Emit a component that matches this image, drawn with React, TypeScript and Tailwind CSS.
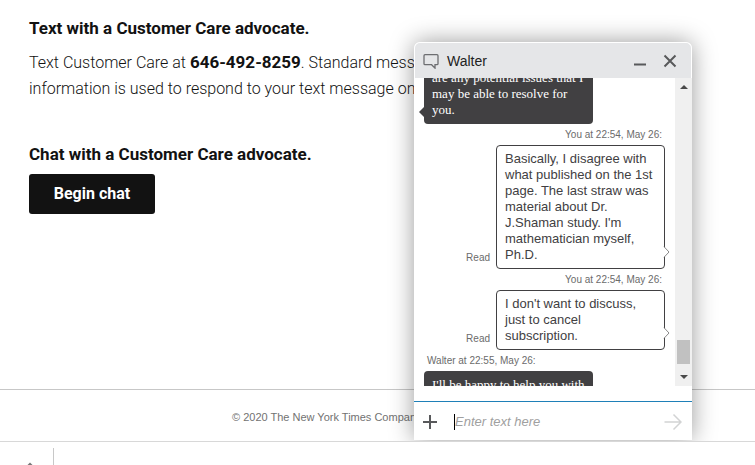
import React, { useState } from "react";

type Message = {
  id: number;
  from: "agent" | "visitor";
  meta?: string;
  text: string;
};

const messages: Message[] = [
  {
    id: 1,
    from: "agent",
    text: "are any potential issues that I may be able to resolve for you.",
  },
  {
    id: 2,
    from: "visitor",
    meta: "You at 22:54, May 26:",
    text: "Basically, I disagree with what published on the 1st page. The last straw was material about Dr. J.Shaman study. I'm mathematician myself, Ph.D.",
  },
  {
    id: 3,
    from: "visitor",
    meta: "You at 22:54, May 26:",
    text: "I don't want to discuss, just to cancel subscription.",
  },
  {
    id: 4,
    from: "agent",
    meta: "Walter at 22:55, May 26:",
    text: "I'll be happy to help you with that.",
  },
];

function AgentMessage({ message }: { message: Message }) {
  return (
    <div className="pl-2.5">
      {message.meta && (
        <p className="mt-[3px] mb-0.5 pl-[3px] text-[10px] leading-4 text-[#6b6b6b]">{message.meta}</p>
      )}
      <div className="relative w-[169px] rounded bg-[#414042] px-2 py-1.5 font-['Liberation_Serif',serif] text-[13px] leading-4 text-white">
        {message.text}
        <svg className="absolute bottom-1.5 -left-[5px] h-3 w-[6px]" viewBox="0 0 6 12" fill="#414042">
          <path d="M6 0L0 6l6 6z" />
        </svg>
      </div>
    </div>
  );
}

function VisitorMessage({ message }: { message: Message }) {
  return (
    <div className="flex flex-col items-end pr-2.5">
      <p className="mt-[3px] mb-0.5 pr-[3px] text-[10px] leading-4 text-[#6b6b6b]">{message.meta}</p>
      <div className="flex items-end gap-1.5">
        <span className="pb-[3px] text-[10px] leading-4 text-[#6b6b6b]">Read</span>
        <div className="relative w-[169px] rounded border border-[#414042] bg-white px-2 py-[5px] text-[13px] leading-4 text-[#414042]">
          {message.text}
          <svg className="absolute -right-1.5 bottom-2.5 h-3 w-[7px]" viewBox="0 0 7 12" fill="none">
            <path d="M0 1h1v10H0z" fill="#fff" />
            <path d="M1 .7L6 6l-5 5.3" fill="#fff" stroke="#8a8a8a" />
          </svg>
        </div>
      </div>
    </div>
  );
}

function ChatWidget() {
  const [open, setOpen] = useState(true);
  const [minimized, setMinimized] = useState(false);
  const [draft, setDraft] = useState("");

  if (!open) return null;

  return (
    <aside
      aria-label="Chat"
      className="absolute right-[63px] bottom-px w-[278px] overflow-hidden rounded-t-md bg-white font-['Liberation_Sans',Arial,sans-serif] shadow-[0_0_24px_rgba(0,0,0,0.4)]"
    >
      {/* Header */}
      <header className="flex h-9 items-center rounded-t-md border border-b-0 border-white bg-[#e5e6e8] pr-3.5 pl-2">
        <svg className="mr-2 h-4 w-4" viewBox="0 0 16 16" fill="none" stroke="#6d6e71" strokeWidth="1.3">
          <path d="M2 1.7h12q1 0 1 1v8q0 1-1 1h-2v3.4L8.600 11.700H2q-1 0-1-1v-8q0-1 1-1z" />
        </svg>
        <h2 className="flex-1 text-sm text-[#222]">Walter</h2>
        <button type="button" aria-label="Minimize" onClick={() => setMinimized(!minimized)}>
          <svg className="h-3.5 w-3.5" viewBox="0 0 14 14">
            <path d="M1 9.500h12v2H1z" fill="#58595b" />
          </svg>
        </button>
        <button type="button" aria-label="Close" className="ml-4" onClick={() => setOpen(false)}>
          <svg className="h-3.5 w-3.5" viewBox="0 0 14 14" stroke="#58595b" strokeWidth="2">
            <path d="M1.500 1.500l11 11M12.500 1.500l-11 11" />
          </svg>
        </button>
      </header>

      {!minimized && (
        <>
          <div className="flex h-[308px]">
            {/* Messages */}
            <div className="flex-1 overflow-hidden">
              <div className="-mt-3.5">
                {messages.map((m) =>
                  m.from === "agent" ? (
                    <AgentMessage key={m.id} message={m} />
                  ) : (
                    <VisitorMessage key={m.id} message={m} />
                  )
                )}
              </div>
            </div>

            {/* Scrollbar */}
            <div className="flex w-[17px] flex-col items-center bg-[#f0f0f0] py-1.5">
              <svg className="h-1.5 w-2" viewBox="0 0 8 6" fill="#4a4a4a">
                <path d="M0 5l4-4 4 4z" />
              </svg>
              <div className="mt-auto mb-2.5 h-6 w-[13px] bg-[#c1c1c1]" />
              <svg className="h-1.5 w-2" viewBox="0 0 8 6" fill="#4a4a4a">
                <path d="M0 1l4 4 4-4z" />
              </svg>
            </div>
          </div>

          {/* Input */}
          <div className="mt-[15px] h-px bg-[#1f80b8]" />
          <form
            className="flex h-[38px] items-center pt-0.5 pr-2.5 pl-2"
            onSubmit={(e) => {
              e.preventDefault();
              setDraft("");
            }}
          >
            <button type="button" aria-label="Attach">
              <svg className="h-4 w-4" viewBox="0 0 16 16" fill="#58595b">
                <path d="M7 1h2v6h6v2H9v6H7V9H1V7h6z" />
              </svg>
            </button>
            <span className="ml-4 h-4 w-px bg-black" />
            <input
              type="text"
              aria-label="Message"
              placeholder="Enter text here"
              value={draft}
              onChange={(e) => setDraft(e.target.value)}
              className="min-w-0 flex-1 text-[13px] leading-5 text-[#222] outline-none placeholder:text-[#a0a0a0] placeholder:italic"
            />
            <button type="submit" aria-label="Send">
              <svg className="h-[18px] w-[18px]" viewBox="0 0 18 18" fill="none" stroke="#d2d3d4" strokeWidth="1.500">
                <path d="M.5 9h16.500M9.500 1.500L17 9l-7.500 7.500" />
              </svg>
            </button>
          </form>
        </>
      )}
    </aside>
  );
}

export default function App() {
  return (
    <div className="flex h-screen flex-col overflow-hidden bg-white font-[Roboto,sans-serif] text-[#121212]">
      <div className="relative flex flex-1 flex-col overflow-hidden border-b border-[#d8d8d8]">
        <main className="flex-1 px-[29px] pt-4">
          <section>
            <h3 className="text-[17px] leading-6 font-bold">Text with a Customer Care advocate.</h3>
            <p className="mt-2.5 text-base leading-[26px] font-light whitespace-nowrap">
              Text Customer Care at <strong className="text-[17px] leading-none font-bold">646-492-8259</strong>. Standard
              messaging rates may apply. Your
              <br />
              information is used to respond to your text message only.
            </p>
          </section>
          <section className="mt-10">
            <h3 className="text-[17px] leading-6 font-bold">Chat with a Customer Care advocate.</h3>
            <button type="button" className="mt-2 h-10 w-[126px] rounded-[3px] bg-[#121212] text-base font-bold text-white">
              Begin chat
            </button>
          </section>
        </main>

        <footer className="flex h-[52px] items-center border-t border-[#c7c7c7] pt-1 pl-[232px] font-['Liberation_Sans',Arial,sans-serif] text-[11px] text-[#727272]">
          © 2020 The New York Times Company
        </footer>

        <ChatWidget />
      </div>

      {/* Bottom bar */}
      <div className="flex h-[23px] items-end">
        <div className="flex h-[17px] w-[54px] items-end border-r border-[#c8c8c8] pl-[27px]">
          <svg className="h-[3px] w-1.5" viewBox="0 0 6 3" fill="#777">
            <path d="M3 .5L5.500 3h-5z" />
          </svg>
        </div>
      </div>
    </div>
  );
}
